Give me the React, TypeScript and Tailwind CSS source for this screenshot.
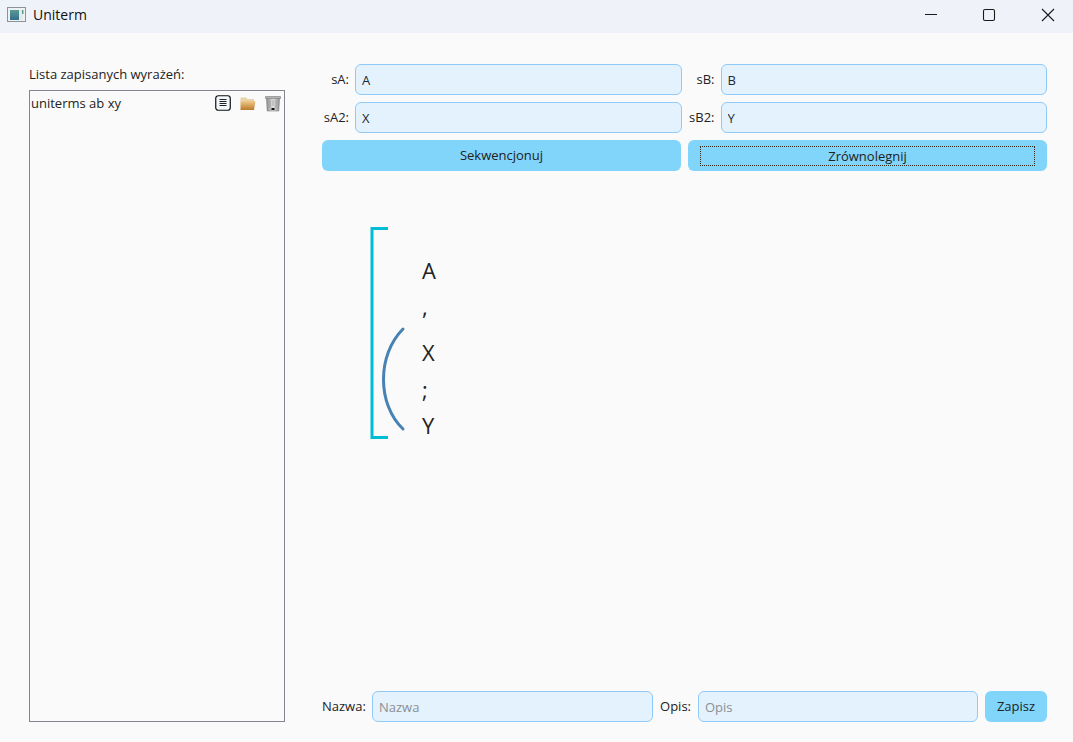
import { useState } from 'react'

const font = "font-['Open_Sans','Noto_Sans',sans-serif]"

function AppIcon() {
  return (
    <svg width="20" height="16" viewBox="0 0 20 16" className="flex-shrink-0">
      <defs>
        <linearGradient id="appg" x1="0" y1="0" x2="0" y2="1">
          <stop offset="0" stopColor="#5a9a94" />
          <stop offset="1" stopColor="#356f8c" />
        </linearGradient>
      </defs>
      <rect x="0.5" y="0.5" width="18" height="14" fill="#eef1f1" stroke="#8a9495" />
      <rect x="3" y="3" width="9" height="10" fill="url(#appg)" />
      <rect x="12" y="3" width="4" height="10" fill="#e3e9e8" />
      <rect x="15" y="3" width="1.5" height="4" fill="#5d9a8c" />
    </svg>
  )
}

function WindowButtons() {
  return (
    <div className="flex items-center h-full">
      <svg width="14" height="14" viewBox="0 0 14 14" className="mr-[45px]">
        <path d="M2 6.5H14" stroke="#1a1a1a" strokeWidth="1" />
      </svg>
      <svg width="14" height="14" viewBox="0 0 14 14" className="mr-[45px]">
        <rect x="1.5" y="1.5" width="11" height="11" rx="1.5" fill="none" stroke="#1a1a1a" strokeWidth="1.1" />
      </svg>
      <svg width="14" height="14" viewBox="0 0 14 14" className="mr-[18px]">
        <path d="M1 1L13 13M13 1L1 13" stroke="#1a1a1a" strokeWidth="1.1" />
      </svg>
    </div>
  )
}

function ListIcon() {
  return (
    <svg width="16" height="16" viewBox="0 0 16 16">
      <rect x="0.75" y="0.75" width="14.5" height="14.5" rx="2.5" fill="#f3f8fe" stroke="#111" strokeWidth="1.2" />
      <path d="M4.5 4.5H11.5M4.5 6.5H11.5M4.5 8.5H11.5M4.5 10.5H11.5" stroke="#222" strokeWidth="1" />
    </svg>
  )
}

function FolderIcon() {
  return (
    <svg width="16" height="16" viewBox="0 0 16 16">
      <defs>
        <linearGradient id="fold" x1="0" y1="0" x2="0" y2="1">
          <stop offset="0" stopColor="#f0cb8a" />
          <stop offset="1" stopColor="#b97a2c" />
        </linearGradient>
      </defs>
      <path d="M0.5 2.5H6L7.5 4H14V6H4L0.5 8Z" fill="#e8d2a8" />
      <path d="M0.5 15V6.5L3.5 6H15.5L14 15Z" fill="url(#fold)" />
    </svg>
  )
}

function TrashIcon() {
  return (
    <svg width="16" height="17" viewBox="0 0 16 17">
      <defs>
        <linearGradient id="trash" x1="0" y1="0" x2="1" y2="0">
          <stop offset="0" stopColor="#8a8a8a" />
          <stop offset="0.5" stopColor="#e4e4e4" />
          <stop offset="1" stopColor="#8f8f8f" />
        </linearGradient>
      </defs>
      <path d="M0.5 1.5H15.5V3.5H0.5Z" fill="#b5b5b5" stroke="#777" strokeWidth="0.6" />
      <path d="M1.5 3.5H14.5L13.8 16H2.2Z" fill="url(#trash)" stroke="#808080" strokeWidth="0.6" />
      <path d="M5 5V13M8 5V11M11 5V13" stroke="#9a9a9a" strokeWidth="0.8" />
      <rect x="6.5" y="13" width="3" height="2" fill="#111" />
    </svg>
  )
}

function Field({ label, value }: { label: string; value: string }) {
  const [v, setV] = useState(value)
  return (
    <div className="flex-1 flex items-center">
      <span className="w-[33px] pr-[6px] pt-[1px] text-right text-[13px] whitespace-nowrap text-[#222]">{label}</span>
      <input
        value={v}
        onChange={e => setV(e.target.value)}
        className="flex-1 min-w-0 h-[31px] px-[6px] pt-[1px] rounded-[6px] border border-[#90caf9] bg-[#e3f2fd] text-[13px] text-[#1f2937] outline-none"
      />
    </div>
  )
}

function BottomInput({ placeholder, width }: { placeholder: string; width: string }) {
  return (
    <input
      placeholder={placeholder}
      className={`${width} h-[31px] px-[6px] pt-[1px] rounded-[6px] border border-[#90caf9] bg-[#e3f2fd] text-[13px] text-[#1f2937] outline-none placeholder:text-[#8b8f94]`}
    />
  )
}

export default function App() {
  return (
    <div className={`${font} w-[1073px] h-[742px] flex flex-col overflow-hidden bg-[#fafafa] text-[#1a1a1a]`}>
      <header className="flex-shrink-0 h-[33px] flex items-center justify-between pl-[7px] pb-[4px] bg-[#eff3f9]">
        <div className="flex items-center gap-[6px]">
          <AppIcon />
          <span className="text-[14px] text-[#111]">Uniterm</span>
        </div>
        <WindowButtons />
      </header>

      <main className="flex-1 min-h-0 flex pl-[29px] pr-[26px] pt-[31px] pb-[20px] gap-[37px]">
        <aside className="w-[256px] flex-shrink-0 flex flex-col">
          <div className="h-[26px] text-[13px] leading-[20px] text-[#222]">Lista zapisanych wyrażeń:</div>
          <div className="flex-1 border border-[#85858f]">
            <div className="flex items-center justify-between h-[22px] pl-[1px] pr-[3px] mt-[1px]">
              <span className="text-[13px] pt-[1px] text-[#222]">uniterms ab xy</span>
              <div className="flex items-center gap-[9px]">
                <ListIcon />
                <FolderIcon />
                <TrashIcon />
              </div>
            </div>
          </div>
        </aside>

        <section className="flex-1 min-w-0 flex flex-col">
          <div className="flex gap-[6px]">
            <Field label="sA:" value="A" />
            <Field label="sB:" value="B" />
          </div>
          <div className="flex gap-[6px] mt-[7px]">
            <Field label="sA2:" value="X" />
            <Field label="sB2:" value="Y" />
          </div>
          <div className="grid grid-cols-2 gap-[7px] mt-[7px]">
            <button className="h-[31px] pt-[1px] rounded-[6px] bg-[#81d4fa] text-[13px] text-[#222]">Sekwencjonuj</button>
            <button className="h-[31px] rounded-[6px] bg-[#81d4fa] text-[13px] text-[#222] px-[12px] pt-[6px] pb-[5px]">
              <span className="flex items-center justify-center w-full h-full pt-[1px] border border-dotted border-[#3a2a1a] leading-none">
                Zrównolegnij
              </span>
            </button>
          </div>

          <div className="flex-1 flex items-start pl-[48px] pt-[56px]">
            <svg width="52" height="213" viewBox="0 0 52 213" className="flex-shrink-0">
              <path d="M18 1.5H2V210.5H18" fill="none" stroke="#00bcd4" strokeWidth="3" />
              <path d="M33 102C7 128 7 177 33 202" fill="none" stroke="#4682b4" strokeWidth="3" strokeLinecap="round" />
            </svg>
            <div className="text-[22px] leading-[30px] text-[#222] mt-[28px]">
              <div>A</div>
              <div className="mt-[6px]">,</div>
              <div className="mt-[16px]">X</div>
              <div className="mt-[7px]">;</div>
              <div className="mt-[6px]">Y</div>
            </div>
          </div>

          <div className="flex items-center">
            <span className="w-[50px] pt-[1px] text-[13px] text-[#222]">Nazwa:</span>
            <BottomInput placeholder="Nazwa" width="w-[281px]" />
            <span className="w-[45px] pr-[7px] pt-[1px] text-right text-[13px] text-[#222]">Opis:</span>
            <BottomInput placeholder="Opis" width="w-[280px]" />
            <button className="ml-[7px] w-[62px] h-[31px] pt-[1px] rounded-[6px] bg-[#81d4fa] text-[13px] text-[#222]">Zapisz</button>
          </div>
        </section>
      </main>
    </div>
  )
}
